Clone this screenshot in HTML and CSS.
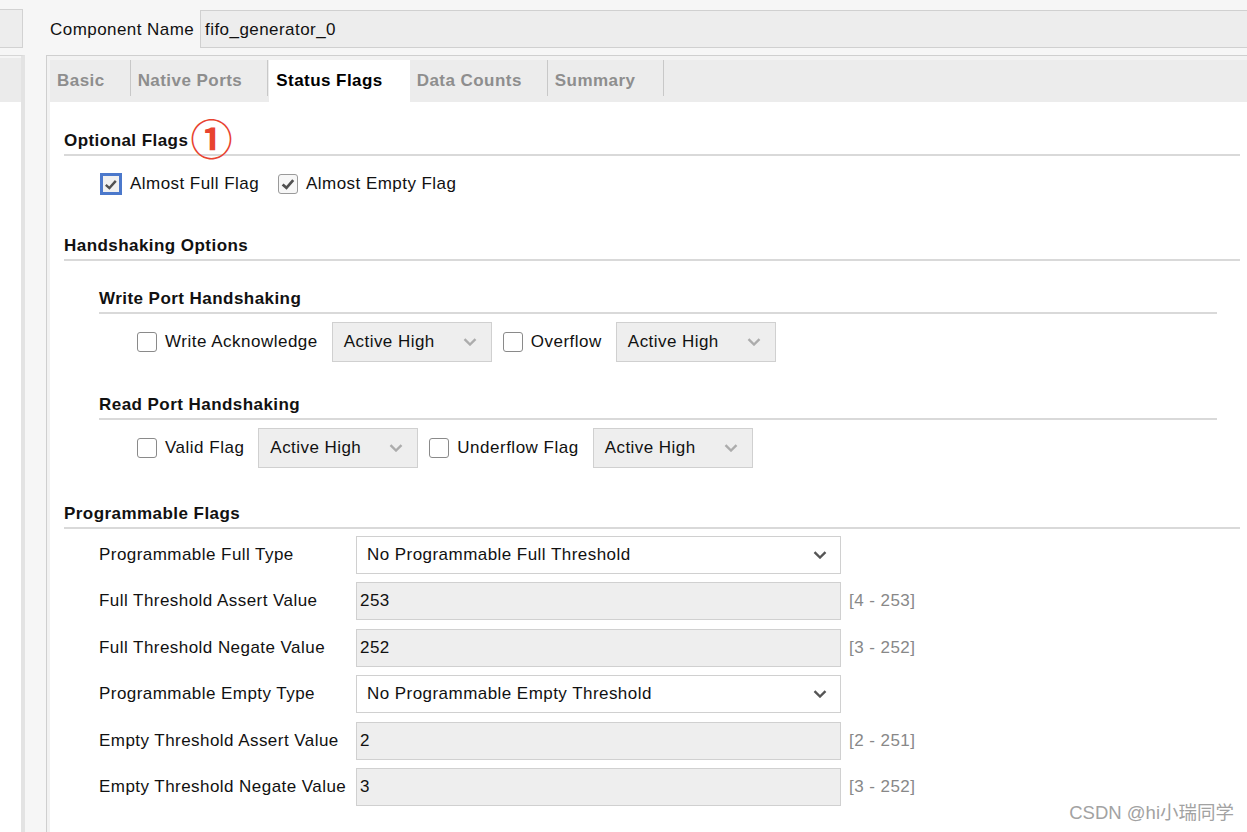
FILE: index.html
```html
<!DOCTYPE html>
<html>
<head>
<meta charset="utf-8">
<title>FIFO Generator - Status Flags</title>
<link rel="stylesheet" href="styles.css">
</head>
<body>
<div class="app">
  <aside class="side">
    <div class="side-box"></div>
    <div class="side-panel"><div class="side-head"></div></div>
  </aside>
  <main class="main">
    <div class="name-row">
      <span class="name-label">Component Name</span>
      <div class="name-input">fifo_generator_0</div>
    </div>
    <div class="tabpanel">
      <div class="tabs">
        <div class="tab">Basic</div>
        <div class="tab">Native Ports</div>
        <div class="tab active">Status Flags</div>
        <div class="tab">Data Counts</div>
        <div class="tab">Summary</div>
      </div>
      <div class="content">
        <div class="sec-h">Optional Flags<span class="mark">①</span></div>
        <div class="opt-row">
          <span class="cb cb-focus"><svg viewBox="0 0 20 20" width="17" height="17"><path d="M3.5 10.5 L8 14.5 L16 5.5" fill="none" stroke="#505050" stroke-width="3"/></svg></span>
          <span class="lbl">Almost Full Flag</span>
          <span class="cb checked second"><svg viewBox="0 0 20 20" width="18" height="18"><path d="M4 10.5 L8.3 14.3 L15.8 5.8" fill="none" stroke="#505050" stroke-width="3"/></svg></span>
          <span class="lbl">Almost Empty Flag</span>
        </div>

        <div class="sec-h sec-hs">Handshaking Options</div>
        <div class="sub sub-write">
          <div class="sec-h">Write Port Handshaking</div>
          <div class="hs-row">
            <span class="cb"></span><span class="lbl">Write Acknowledge</span>
            <div class="combo gray"><span>Active High</span><svg width="14" height="8" viewBox="0 0 14 8"><path d="M1.5 1.2 L7 6.5 L12.5 1.2" fill="none" stroke="#acacac" stroke-width="2.4"/></svg></div>
            <span class="cb"></span><span class="lbl">Overflow</span>
            <div class="combo gray"><span>Active High</span><svg width="14" height="8" viewBox="0 0 14 8"><path d="M1.5 1.2 L7 6.5 L12.5 1.2" fill="none" stroke="#acacac" stroke-width="2.4"/></svg></div>
          </div>
        </div>
        <div class="sub sub-read">
          <div class="sec-h">Read Port Handshaking</div>
          <div class="hs-row">
            <span class="cb"></span><span class="lbl">Valid Flag</span>
            <div class="combo gray"><span>Active High</span><svg width="14" height="8" viewBox="0 0 14 8"><path d="M1.5 1.2 L7 6.5 L12.5 1.2" fill="none" stroke="#acacac" stroke-width="2.4"/></svg></div>
            <span class="cb"></span><span class="lbl">Underflow Flag</span>
            <div class="combo gray"><span>Active High</span><svg width="14" height="8" viewBox="0 0 14 8"><path d="M1.5 1.2 L7 6.5 L12.5 1.2" fill="none" stroke="#acacac" stroke-width="2.4"/></svg></div>
          </div>
        </div>

        <div class="sec-h sec-prog">Programmable Flags</div>
        <div class="prog">
          <span class="plbl">Programmable Full Type</span>
          <div class="combo white"><span>No Programmable Full Threshold</span><svg width="14" height="8" viewBox="0 0 14 8"><path d="M1.5 1.2 L7 6.5 L12.5 1.2" fill="none" stroke="#555" stroke-width="2.4"/></svg></div>
          <span></span>

          <span class="plbl">Full Threshold Assert Value</span>
          <div class="field">253</div>
          <span class="range">[4 - 253]</span>

          <span class="plbl">Full Threshold Negate Value</span>
          <div class="field">252</div>
          <span class="range">[3 - 252]</span>

          <span class="plbl">Programmable Empty Type</span>
          <div class="combo white"><span>No Programmable Empty Threshold</span><svg width="14" height="8" viewBox="0 0 14 8"><path d="M1.5 1.2 L7 6.5 L12.5 1.2" fill="none" stroke="#555" stroke-width="2.4"/></svg></div>
          <span></span>

          <span class="plbl">Empty Threshold Assert Value</span>
          <div class="field">2</div>
          <span class="range">[2 - 251]</span>

          <span class="plbl">Empty Threshold Negate Value</span>
          <div class="field">3</div>
          <span class="range">[3 - 252]</span>
        </div>
      </div>
    </div>
  </main>
</div>
<div class="watermark">CSDN @hi小瑞同学</div>
</body>
</html>
```

FILE: styles.css
```css
* { box-sizing: border-box; }

html, body { height: 100%; }

body {
  margin: 0;
  background: #f6f6f6;
  font-family: "Liberation Sans", Arial, sans-serif;
  font-size: 17px;
  letter-spacing: 0.45px;
  color: #111;
  overflow: hidden;
  position: relative;
}

.app {
  display: flex;
  height: 100vh;
}

/* left stub panel */
.side {
  width: 25px;
  flex-shrink: 0;
  display: flex;
  flex-direction: column;
}
.side-box {
  width: 23px;
  height: 39px;
  margin-top: 9px;
  background: #ededed;
  border: 1px solid #d2d2d2;
  border-left: none;
}
.side-panel {
  flex: 1;
  margin-top: 7px;
  background: #fff;
  border-top: 1px solid #d6d6d6;
  border-right: 4px solid #e3e3e3;
}
.side-head {
  height: 46px;
  background: #ebebeb;
  border-top: 2px solid #f5f5f5;
}

/* main column */
.main {
  flex: 1;
  min-width: 0;
  margin-left: 21px;
  display: flex;
  flex-direction: column;
}
.name-row {
  height: 55px;
  flex-shrink: 0;
  display: flex;
  align-items: flex-start;
}
.name-label {
  width: 154px;
  padding-left: 4px;
  margin-top: 20px;
  line-height: 20px;
}
.name-input {
  flex: 1;
  margin-top: 10px;
  height: 38px;
  background: #ededed;
  border: 1px solid #d0d0d0;
  border-right: none;
  padding-left: 4px;
  line-height: 38px;
}

.tabpanel {
  flex: 1;
  display: flex;
  flex-direction: column;
  border-top: 1px solid #cfcfcf;
  border-left: 1px solid #cfcfcf;
  padding: 4px 0 0 3px;
  background: #f2f2f2;
}
.tabs {
  display: flex;
  height: 42px;
  flex-shrink: 0;
  background: #ececec;
}
.tab {
  padding: 0 26px 0 7px;
  line-height: 42px;
  font-weight: bold;
  color: #8e8e8e;
  background: linear-gradient(#c8c8c8, #c8c8c8) right top / 1px 36px no-repeat;
}
.tab.active {
  background: #fff;
  color: #000;
  margin-left: 1px;
  padding: 0 27px 0 7px;
}
.tab:last-child {
  padding-right: 29px;
}

.content {
  flex: 1;
  background: #fff;
  padding: 29px 7px 0 14px;
}

.sec-h {
  font-weight: bold;
  line-height: 20px;
  padding-bottom: 3px;
  border-bottom: 2px solid #d9d9d9;
  color: #111;
}
.mark {
  display: inline-block;
  position: relative;
  top: -4px;
  height: 20px;
  line-height: 20px;
  font-family: "Noto Sans CJK SC", "DejaVu Sans", sans-serif;
  font-weight: bold;
  font-size: 42px;
  color: #e8432f;
  letter-spacing: 0;
  vertical-align: top;
  margin-left: 2px;
}

.opt-row {
  display: flex;
  align-items: center;
  height: 22px;
  margin-top: 17px;
  padding-left: 36px;
}
.lbl {
  margin-left: 8px;
  line-height: 20px;
}

.cb {
  width: 20px;
  height: 20px;
  flex-shrink: 0;
  border: 1.5px solid #8a8a8a;
  border-radius: 3px;
  background: #fff;
  display: flex;
  align-items: center;
  justify-content: center;
}
.cb.checked {
  background: #f7f7f7;
  border-color: #9a9a9a;
}
.cb.cb-focus {
  width: 22px;
  height: 22px;
  border: 3px solid #4b78cb;
  border-radius: 0;
  background: #f0f0f0;
}
.cb.second {
  margin-left: 19px;
}

.sec-hs {
  margin-top: 41px;
}
.sub {
  margin: 0 23px 0 35px;
}
.sub-write { margin-top: 28px; }
.sub-read { margin-top: 33px; }

.hs-row {
  display: flex;
  align-items: center;
  height: 40px;
  margin-top: 8px;
  padding-left: 38px;
}
.hs-row .lbl {
  letter-spacing: 0.5px;
}

.combo {
  display: flex;
  align-items: center;
  justify-content: space-between;
  border: 1px solid #d0d0d0;
}
.combo.gray {
  width: 160px;
  height: 40px;
  margin: 0 11px 0 14px;
  padding: 0 14px 0 11px;
  background: #eeeeee;
}
.combo.white {
  height: 38px;
  padding: 0 13px 0 10px;
  background: #fff;
}

.sec-prog {
  margin-top: 36px;
}
.prog {
  display: grid;
  grid-template-columns: 257px 485px auto;
  row-gap: 8.4px;
  align-items: center;
  margin: 7px 0 0 35px;
}
.plbl {
  line-height: 20px;
}
.field {
  height: 38px;
  background: #eeeeee;
  border: 1px solid #d0d0d0;
  padding-left: 3px;
  line-height: 36px;
}
.range {
  margin-left: 8px;
  color: #888;
}

.watermark {
  position: absolute;
  right: 13px;
  bottom: 8px;
  font-family: "Liberation Sans", "Noto Sans CJK SC", sans-serif;
  font-size: 18.5px;
  letter-spacing: 0;
  color: #a2a2a2;
  text-shadow: 0 0 2px #fff;
}
```
